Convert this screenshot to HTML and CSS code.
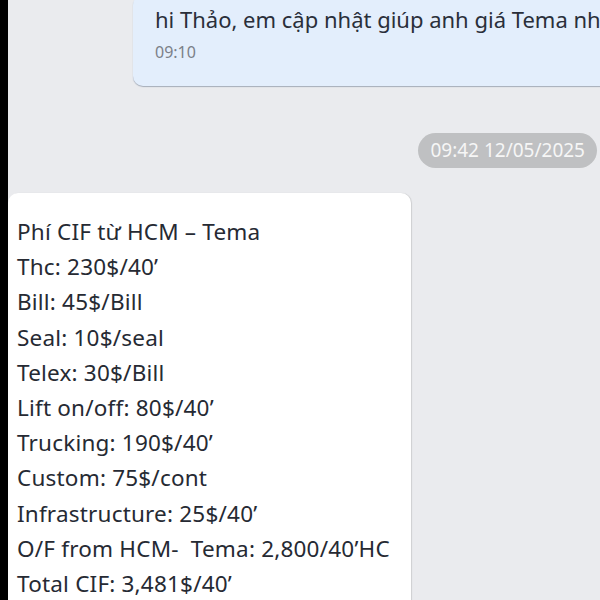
FILE: index.html
```html
<!DOCTYPE html>
<html lang="vi">
<head>
  <meta charset="UTF-8">
  <title>Chat</title>
  <link rel="stylesheet" href="styles.css">
</head>
<body>
  <div class="edge"></div>
  <div class="chat">
    <div class="bubble bubble-me">
      <div class="msg-text">hi Thảo, em cập nhật giúp anh giá Tema nhé</div>
      <div class="msg-time">09:10</div>
    </div>

    <div class="stamp-row">
      <span class="stamp">09:42 12/05/2025</span>
    </div>

    <div class="bubble bubble-them">
      <div>Phí CIF từ HCM – Tema</div>
      <div>Thc: 230$/40’</div>
      <div>Bill: 45$/Bill</div>
      <div>Seal: 10$/seal</div>
      <div>Telex: 30$/Bill</div>
      <div>Lift on/off: 80$/40’</div>
      <div>Trucking: 190$/40’</div>
      <div>Custom: 75$/cont</div>
      <div>Infrastructure: 25$/40’</div>
      <div>O/F from HCM-&nbsp; Tema: 2,800/40’HC</div>
      <div>Total CIF: 3,481$/40’</div>
      <div>&nbsp;</div>
    </div>
  </div>
</body>
</html>
```

FILE: styles.css
```css
html, body {
  height: 100%;
}

body {
  margin: 0;
  display: flex;
  background: #000;
  font-family: 'Noto Sans', Roboto, sans-serif;
  overflow: hidden;
}

.edge {
  width: 8px;
  flex: none;
}

.chat {
  flex: 1;
  background: #eaebee;
  padding-right: 3px;
  overflow: hidden;
}

.bubble {
  box-sizing: border-box;
}

.bubble-me {
  margin: -5px 0 0 125px;
  width: 480px;
  padding: 10px 0 24px 22px;
  background: #e3eefc;
  border-radius: 10px;
  box-shadow: 0 1px 1px rgba(40, 60, 90, 0.35);
  white-space: nowrap;
  overflow: hidden;
}

.msg-text {
  font-size: 22px;
  line-height: 28px;
  color: #2a2f3a;
}

.msg-time {
  margin-top: 9px;
  font-size: 16px;
  line-height: 20px;
  color: #7b8088;
}

.stamp-row {
  display: flex;
  justify-content: flex-end;
  margin-top: 47px;
}

.stamp {
  display: inline-block;
  height: 35px;
  line-height: 35px;
  padding: 0 12px;
  border-radius: 18px;
  background: #bfc0c2;
  color: #f6f6f6;
  font-size: 19px;
}

.bubble-them {
  margin-top: 25px;
  width: 403px;
  padding: 21px 9px 0 9px;
  background: #ffffff;
  border-radius: 10px;
  box-shadow: 1px 0 1px rgba(0, 0, 0, 0.12);
  font-size: 22.5px;
  letter-spacing: 0.2px;
  line-height: 35.2px;
  color: #262a33;
  white-space: nowrap;
}
```
